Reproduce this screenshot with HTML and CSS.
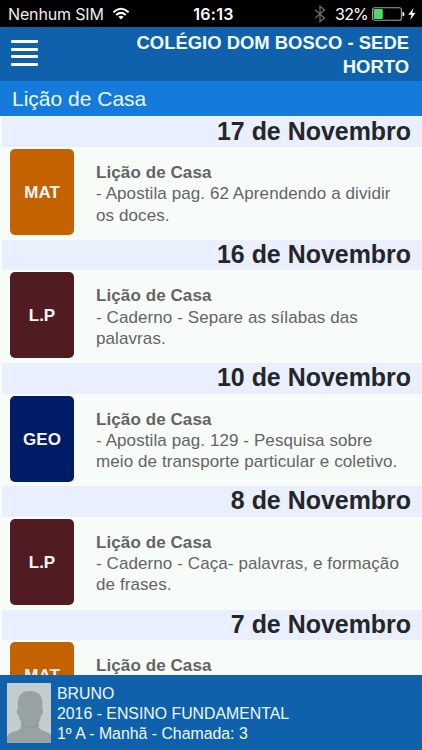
FILE: index.html
```html
<!DOCTYPE html>
<html lang="pt-BR">
<head>
<meta charset="utf-8">
<title>Lição de Casa</title>
<link rel="stylesheet" href="styles.css">
</head>
<body>
<div class="app">
  <div class="status">
    <div class="carrier"><span>Nenhum SIM</span>
      <svg width="18" height="14" viewBox="0 0 18 14" fill="none" stroke="#fff" stroke-width="2"><path d="M1.4 5.2Q9 -1.6 16.6 5.2M4.2 8Q9 3.8 13.8 8"/><path d="M6.4 9.8Q9 7.7 11.6 9.8L9 12.6Z" fill="#fff" stroke="none"/></svg>
    </div>
    <div class="clock">16:13</div>
    <div class="power">
      <svg class="bt" width="12" height="18" viewBox="0 0 12 18" fill="none" stroke="#6b6b6b" stroke-width="1.3"><path d="M1 4.8L10.5 13L6 16.7V1.3L10.5 5L1 13.2"/></svg>
      <span class="percent">32%</span>
      <svg width="46" height="16" viewBox="0 0 46 16"><rect x="1.6" y="1.8" width="28.8" height="12.4" rx="2" fill="none" stroke="#a5a5a5" stroke-width="1.1"/><rect x="2.8" y="3" width="9" height="10" rx=".8" fill="#4cd964"/><path d="M31.5 5.5Q33.5 6 33.5 8T31.5 10.5Z" fill="#fff"/><path d="M42.6 2L37.2 8.7H40.6L39.2 14L44.4 7H41.2Z" fill="#fff"/></svg>
    </div>
  </div>
  <header class="header">
    <div class="menu"><i></i><i></i><i></i><i></i></div>
    <h1>COLÉGIO DOM BOSCO - SEDE<br>HORTO</h1>
  </header>
  <div class="subheader">Lição de Casa</div>
  <main class="list">
    <section><h2>17 de Novembro</h2><div class="row"><div class="tile mat">MAT</div><div class="text"><b>Lição de Casa</b><br>- Apostila pag. 62 Aprendendo a dividir<br>os doces.</div></div></section>
    <section><h2>16 de Novembro</h2><div class="row"><div class="tile lp">L.P</div><div class="text"><b>Lição de Casa</b><br>- Caderno - Separe as sílabas das<br>palavras.</div></div></section>
    <section><h2>10 de Novembro</h2><div class="row"><div class="tile geo">GEO</div><div class="text"><b>Lição de Casa</b><br>- Apostila pag. 129 - Pesquisa sobre<br>meio de transporte particular e coletivo.</div></div></section>
    <section><h2>8 de Novembro</h2><div class="row"><div class="tile lp">L.P</div><div class="text"><b>Lição de Casa</b><br>- Caderno - Caça- palavras, e formação<br>de frases.</div></div></section>
    <section><h2>7 de Novembro</h2><div class="row"><div class="tile mat short">MAT</div><div class="text"><b>Lição de Casa</b></div></div></section>
  </main>
  <footer class="footer">
    <svg class="avatar" width="44" height="60" viewBox="0 0 44 60"><rect width="44" height="60" fill="#c5cccd"/><path d="M0 60V53Q2 49.5 9 48Q14 46.5 14 43V39Q12 36 11.5 32Q9.5 31 9.8 26.5Q10.5 26 10.8 26.5V20Q11 8 23 8Q35 8 35.3 20V26.5Q36.2 26 36 28Q35.8 32 34.2 32Q33.6 37 31.5 40V43Q32 46.5 37 48Q43 50 44 52V60Z" fill="#97a3a2"/><path d="M14 39Q18 44 23 44Q28 44 31.5 40V43Q27 46 22 45Q17 44 14 39Z" fill="#8c9998"/></svg>
    <div class="student">BRUNO<br>2016 - ENSINO FUNDAMENTAL<br>1º A - Manhã - Chamada: 3</div>
  </footer>
</div>
</body>
</html>
```
FILE: styles.css
```css
* { box-sizing: border-box; }
body {
  margin: 0;
  font-family: "Liberation Sans", Arial, sans-serif;
  background: #f7fcf9;
}
.app {
  width: 422px;
  height: 750px;
  display: flex;
  flex-direction: column;
  overflow: hidden;
}
.status {
  flex: none;
  height: 27px;
  padding: 1px 5px 0 8px;
  display: grid;
  grid-template-columns: 1fr auto 1fr;
  align-items: center;
  background: #000;
  color: #fff;
  font-family: Inter, sans-serif;
  font-size: 16px;
}
.carrier, .power { display: flex; align-items: center; }
.carrier { gap: 8px; color: #eee; letter-spacing: -0.15px; }
.power { justify-content: flex-end; }
.clock {
  padding-left: 2px;
  font-weight: 600;
  font-size: 16px;
  letter-spacing: 0.3px;
}
.bt { margin-right: 9px; }
.percent { margin-right: 3px; font-size: 16px; letter-spacing: -0.8px; }
.header {
  flex: none;
  height: 54px;
  padding: 4px 13px 0 11px;
  display: flex;
  justify-content: space-between;
  background: #1061ac;
  color: #f4fbff;
}
.menu {
  width: 27px;
  padding-top: 9px;
  display: flex;
  flex-direction: column;
  gap: 4.7px;
}
.menu i { height: 3px; border-radius: 1px; background: #fff; }
h1 {
  margin: 0;
  font-size: 18.45px;
  line-height: 23.5px;
  text-align: right;
}
.subheader {
  flex: none;
  height: 35px;
  padding-left: 12px;
  background: #147bdb;
  color: #eefaff;
  font-size: 21px;
  line-height: 36px;
}
.list {
  flex: 1;
  min-height: 0;
  padding-top: 0.5px;
  overflow: hidden;
  color: #646464;
}
section { height: 123.25px; }
h2 {
  margin: 0 0 0 2px;
  height: 30.5px;
  padding-right: 11px;
  background: #e9effc;
  color: #242629;
  font-size: 24.95px;
  line-height: 29px;
  text-align: right;
}
.row { display: flex; padding: 2px 10px 0; }
.tile {
  flex: none;
  width: 64px;
  height: 86px;
  border-radius: 5px;
  color: #f8f4f3;
  font-size: 17px;
  font-weight: bold;
  line-height: 88px;
  text-align: center;
}
.mat { background: #c46200; }
.lp { background: #501c22; }
.geo { background: #001c66; }
.short { height: 65px; line-height: 67px; }
.text {
  padding: 13px 0 0 22px;
  font-size: 17px;
  line-height: 21.3px;
  letter-spacing: 0.09px;
  white-space: nowrap;
}
.footer {
  flex: none;
  height: 75px;
  padding: 8px 7px;
  display: flex;
  gap: 6px;
  background: #1061ac;
  color: #eefaff;
  font-size: 15.85px;
  line-height: 20px;
}
.student { padding-top: 1px; }
```
